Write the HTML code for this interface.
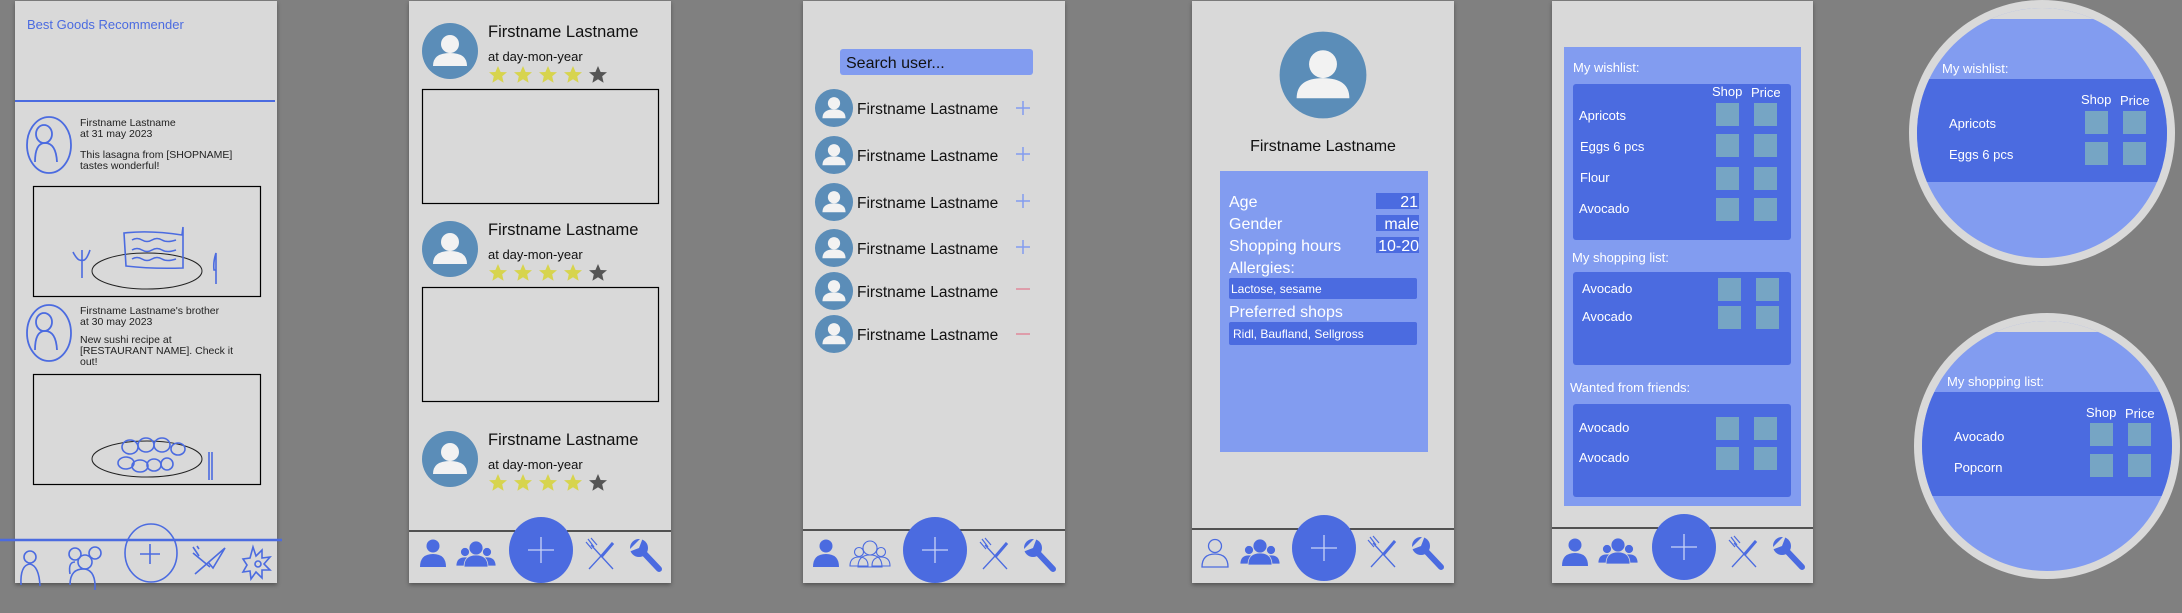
<!DOCTYPE html>
<html><head><meta charset="utf-8"><style>
html,body{margin:0;padding:0;background:#808080;}
svg{display:block;font-family:"Liberation Sans",sans-serif;}
</style></head><body>
<svg width="2182" height="613" viewBox="0 0 2182 613" xmlns="http://www.w3.org/2000/svg">
<defs>
<filter id="sh" x="-10%" y="-10%" width="120%" height="120%"><feDropShadow dx="0" dy="2" stdDeviation="2" flood-color="#000" flood-opacity="0.35"/></filter>
<g id="person"><circle cx="0" cy="-9" r="6.5" fill="#4b6be0"/><path d="M-13,12 Q-13,-1 0,-1 Q13,-1 13,12 Z" fill="#4b6be0"/></g>
<g id="personO" fill="none" stroke="#4b6be0" stroke-width="1.3"><circle cx="0" cy="-9" r="6.5"/><path d="M-13,12 Q-13,-1 0,-1 Q13,-1 13,12 Z"/></g>
<g id="group0"><circle cx="-11" cy="-3" r="4.5"/><path d="M-20,11 Q-20,2 -11,2 Q-2,2 -2,11Z"/><circle cx="11" cy="-3" r="4.5"/><path d="M2,11 Q2,2 11,2 Q20,2 20,11Z"/><circle cx="0" cy="-7" r="7"/><path d="M-12,12 Q-12,0 0,0 Q12,0 12,12 Z"/></g>
<g id="group" fill="#4b6be0" stroke="#d9d9d9" stroke-width="0.8"><use href="#group0"/></g>
<g id="groupO" fill="none" stroke="#4b6be0" stroke-width="1.1"><use href="#group0"/></g>
<g id="cut" stroke="#4b6be0" fill="none"><path d="M-10,-10 L12,14" stroke-width="1.3"/><path d="M12,-12 L-12,14" stroke-width="1.3"/><path d="M12,-12 L0,2" stroke-width="3"/><path d="M-13,-16 L-7,-8 M-10,-17 L-4,-10 M-15,-13 L-9,-6" stroke-width="1.2"/></g>
<g id="wrench"><path d="M-4,-4 L13,14" stroke="#4b6be0" stroke-width="6" stroke-linecap="round"/><circle cx="-7" cy="-7" r="9" fill="#4b6be0"/><path d="M-7,-7 L-2,-20 L-20,-2 Z" fill="#d9d9d9"/></g>
<g id="plusC"><ellipse rx="32" ry="33" fill="#4b6be0"/><path d="M-13,0 H13 M0,-13 V13" stroke="#c9d3f5" stroke-width="1.3"/></g>
<g id="avatar"><circle r="28" fill="#5b8db8"/><circle cx="0" cy="-7" r="9" fill="#f2f2f2"/><path d="M-17,15 Q-17,2 0,2 Q17,2 17,15 Z" fill="#f2f2f2"/></g>
<g id="star"><path d="M0,-9 L2.6,-3 L9,-2.8 L4.2,1.3 L5.6,7.8 L0,4.3 L-5.6,7.8 L-4.2,1.3 L-9,-2.8 L-2.6,-3Z"/></g>
<g id="stars"><use href="#star" x="0" fill="#d7d44e"/><use href="#star" x="25" fill="#d7d44e"/><use href="#star" x="50" fill="#d7d44e"/><use href="#star" x="75" fill="#d7d44e"/><use href="#star" x="100" fill="#555"/></g>
<g id="sq"><rect width="23" height="23" fill="#76a5c4"/></g>
</defs>

<!-- Panel 1 -->
<rect x="15" y="1" width="262" height="582" fill="#d9d9d9" filter="url(#sh)"/>
<text x="27" y="29" font-size="13" fill="#4b6be0">Best Goods Recommender</text>
<line x1="15" y1="101" x2="275" y2="101" stroke="#4b6be0" stroke-width="2"/>
<g fill="none" stroke="#4b6be0" stroke-width="1.8">
<ellipse cx="49" cy="145" rx="22" ry="28"/><ellipse cx="44" cy="134" rx="8" ry="9"/><path d="M35,162 Q35,143 45,143 Q56,143 57,162"/>
<ellipse cx="49" cy="333" rx="22" ry="28"/><ellipse cx="44" cy="322" rx="8" ry="9"/><path d="M35,350 Q35,331 45,331 Q56,331 57,350"/>
</g>
<g font-size="10.5" fill="#222">
<text x="80" y="126">Firstname Lastname</text><text x="80" y="137">at 31 may 2023</text>
<text x="80" y="158">This lasagna from [SHOPNAME]</text><text x="80" y="169">tastes wonderful!</text>
<text x="80" y="314">Firstname Lastname's brother</text><text x="80" y="325">at 30 may 2023</text>
<text x="80" y="343">New sushi recipe at</text><text x="80" y="354">[RESTAURANT NAME]. Check it</text><text x="80" y="365">out!</text>
</g>
<rect x="33.5" y="186.5" width="227" height="110" fill="none" stroke="#000" stroke-width="1.2"/>
<rect x="33.5" y="374.5" width="227" height="110" fill="none" stroke="#000" stroke-width="1.2"/>
<ellipse cx="147" cy="271" rx="55" ry="18" fill="none" stroke="#222" stroke-width="1"/>
<ellipse cx="147" cy="459" rx="55" ry="18" fill="none" stroke="#222" stroke-width="1"/>
<g fill="none" stroke="#4b6be0" stroke-width="1.6">
<path d="M124,233 Q150,230 182,235 L183,227 L183,268 Q150,269 126,266 Q125,250 124,233Z"/>
<path d="M132,240 q5,-3 10,0 t10,0 t10,0 t14,0 M132,250 q5,-3 10,0 t10,0 t10,0 t14,0 M132,259 q5,-3 10,0 t10,0 t10,0 t14,0"/>
<path d="M82,278 V250 M73,252 Q78,262 82,260 Q86,262 90,250 M82,260 V250"/><path d="M216,284 V253 Q213,262 214,270 H216"/>
<path d="M209,452 V480 M212,452 V480"/>
<g><ellipse cx="130" cy="447" rx="8" ry="7"/><ellipse cx="146" cy="445" rx="8" ry="7"/><ellipse cx="162" cy="445" rx="8" ry="7"/><ellipse cx="178" cy="449" rx="7" ry="6"/><ellipse cx="126" cy="463" rx="8" ry="6"/><ellipse cx="140" cy="466" rx="8" ry="6"/><ellipse cx="154" cy="465" rx="7" ry="6"/><ellipse cx="167" cy="464" rx="6" ry="6"/></g>
<ellipse cx="151" cy="553" rx="26" ry="29"/><path d="M140,554 H160 M150,544 V564"/>
<circle cx="30" cy="557" r="6"/><path d="M21,585 Q20,565 30,564 Q39,566 40,586"/>
<circle cx="75" cy="554" r="6"/><circle cx="95" cy="553" r="6"/><circle cx="85" cy="562" r="7"/><path d="M70,585 Q70,568 85,569 Q96,571 95,590 M70,574 Q68,562 75,562"/>
<path d="M195,574 L225,548 L213,568 L208,562 M193,553 L210,567 M193,547 L199,556 M197,546 l2,3"/>
<path d="M253,547 L256,556 L262,550 L262,558 L270,557 L264,564 L270,570 L262,570 L262,578 L256,572 L251,579 L250,571 L243,572 L247,565 L243,559 L250,558Z"/><circle cx="258" cy="564" r="3"/>
</g>
<line x1="0" y1="540" x2="282" y2="540" stroke="#4b6be0" stroke-width="2.4"/>

<!-- Panel 2 -->
<rect x="409" y="1" width="262" height="582" fill="#d9d9d9" filter="url(#sh)"/>
<use href="#avatar" x="450" y="51"/>
<use href="#avatar" x="450" y="249"/>
<use href="#avatar" x="450" y="459"/>
<g fill="#111"><text x="488" y="37" font-size="16.5">Firstname Lastname</text><text x="488" y="61" font-size="13">at day-mon-year</text>
<text x="488" y="235" font-size="16.5">Firstname Lastname</text><text x="488" y="259" font-size="13">at day-mon-year</text>
<text x="488" y="445" font-size="16.5">Firstname Lastname</text><text x="488" y="469" font-size="13">at day-mon-year</text></g>
<use href="#stars" x="498" y="75"/><use href="#stars" x="498" y="273"/><use href="#stars" x="498" y="483"/>
<rect x="422.5" y="89.5" width="236" height="114" fill="none" stroke="#000" stroke-width="1.2"/>
<rect x="422.5" y="287.5" width="236" height="114" fill="none" stroke="#000" stroke-width="1.2"/>
<line x1="409" y1="531" x2="671" y2="531" stroke="#000" stroke-width="1.2"/>
<use href="#person" x="433" y="555"/><use href="#group" x="476" y="555"/><use href="#plusC" x="541" y="550"/><use href="#cut" x="601" y="555"/><use href="#wrench" x="646" y="555"/>

<!-- Panel 3 -->
<rect x="803" y="1" width="262" height="582" fill="#d9d9d9" filter="url(#sh)"/>
<rect x="840" y="49" width="193" height="26" rx="3" fill="#829cf0"/>
<text x="846" y="68" font-size="16" fill="#111">Search user...</text>
<g font-size="15.5" fill="#111">
<use href="#avatar" transform="translate(834,108) scale(0.68)"/><text x="857" y="114">Firstname Lastname</text>
<use href="#avatar" transform="translate(834,155) scale(0.68)"/><text x="857" y="161">Firstname Lastname</text>
<use href="#avatar" transform="translate(834,202) scale(0.68)"/><text x="857" y="208">Firstname Lastname</text>
<use href="#avatar" transform="translate(834,248) scale(0.68)"/><text x="857" y="254">Firstname Lastname</text>
<use href="#avatar" transform="translate(834,291) scale(0.68)"/><text x="857" y="297">Firstname Lastname</text>
<use href="#avatar" transform="translate(834,334) scale(0.68)"/><text x="857" y="340">Firstname Lastname</text>
</g>
<g stroke="#829cf0" stroke-width="1.5"><path d="M1016,108 H1030 M1023,101 V115 M1016,154 H1030 M1023,147 V161 M1016,201 H1030 M1023,194 V208 M1016,247 H1030 M1023,240 V254"/></g>
<g stroke="#e0899b" stroke-width="1.5"><path d="M1016,289 H1030 M1016,334 H1030"/></g>
<line x1="803" y1="530" x2="1065" y2="530" stroke="#000" stroke-width="1.2"/>
<use href="#person" x="826" y="555"/><use href="#groupO" x="870" y="555"/><use href="#plusC" x="935" y="550"/><use href="#cut" x="995" y="555"/><use href="#wrench" x="1040" y="555"/>

<!-- Panel 4 -->
<rect x="1192" y="1" width="262" height="582" fill="#d9d9d9" filter="url(#sh)"/>
<use href="#avatar" transform="translate(1323,75) scale(1.55)"/>
<text x="1323" y="151" font-size="16" fill="#111" text-anchor="middle">Firstname Lastname</text>
<rect x="1220" y="171" width="208" height="281" fill="#829cf0"/>
<rect x="1376" y="193" width="43" height="16" fill="#4b6be0"/><rect x="1376" y="215" width="43" height="16" fill="#4b6be0"/><rect x="1376" y="237" width="43" height="16" fill="#4b6be0"/>
<rect x="1229" y="278" width="188" height="21" rx="2" fill="#4b6be0"/><rect x="1229" y="322" width="188" height="23" rx="2" fill="#4b6be0"/>
<g fill="#fff" font-size="16"><text x="1229" y="207">Age</text><text x="1229" y="229">Gender</text><text x="1229" y="251">Shopping hours</text><text x="1229" y="273">Allergies:</text><text x="1229" y="317">Preferred shops</text>
<text x="1418" y="207" text-anchor="end">21</text><text x="1419" y="229" text-anchor="end">male</text><text x="1419" y="251" text-anchor="end">10-20</text>
<text x="1231" y="293" font-size="12">Lactose, sesame</text><text x="1233" y="338" font-size="12">Ridl, Baufland, Sellgross</text></g>
<line x1="1192" y1="529" x2="1454" y2="529" stroke="#000" stroke-width="1.2"/>
<use href="#personO" x="1215" y="555"/><use href="#group" x="1260" y="553"/><use href="#plusC" x="1324" y="548"/><use href="#cut" x="1383" y="553"/><use href="#wrench" x="1428" y="553"/>

<!-- Panel 5 -->
<rect x="1552" y="1" width="261" height="582" fill="#d9d9d9" filter="url(#sh)"/>
<rect x="1564" y="47" width="237" height="459" fill="#829cf0"/>
<rect x="1573" y="84" width="218" height="156" rx="3" fill="#4b6be0"/>
<rect x="1573" y="272" width="218" height="93" rx="3" fill="#4b6be0"/>
<rect x="1573" y="404" width="218" height="93" rx="3" fill="#4b6be0"/>
<g fill="#fff" font-size="13">
<text x="1573" y="72">My wishlist:</text><text x="1712" y="96">Shop</text><text x="1751" y="97">Price</text>
<text x="1579" y="120">Apricots</text><text x="1580" y="151">Eggs 6 pcs</text><text x="1580" y="182">Flour</text><text x="1579" y="213">Avocado</text>
<text x="1572" y="262">My shopping list:</text><text x="1582" y="293">Avocado</text><text x="1582" y="321">Avocado</text>
<text x="1570" y="392">Wanted from friends:</text><text x="1579" y="432">Avocado</text><text x="1579" y="462">Avocado</text>
</g>
<use href="#sq" x="1716" y="103"/><use href="#sq" x="1754" y="103"/><use href="#sq" x="1716" y="134"/><use href="#sq" x="1754" y="134"/>
<use href="#sq" x="1716" y="167"/><use href="#sq" x="1754" y="167"/><use href="#sq" x="1716" y="198"/><use href="#sq" x="1754" y="198"/>
<use href="#sq" x="1718" y="278"/><use href="#sq" x="1756" y="278"/><use href="#sq" x="1718" y="306"/><use href="#sq" x="1756" y="306"/>
<use href="#sq" x="1716" y="417"/><use href="#sq" x="1754" y="417"/><use href="#sq" x="1716" y="447"/><use href="#sq" x="1754" y="447"/>
<line x1="1552" y1="528" x2="1813" y2="528" stroke="#000" stroke-width="1.2"/>
<use href="#person" x="1575" y="554"/><use href="#group" x="1618" y="552"/><use href="#plusC" x="1684" y="547"/><use href="#cut" x="1744" y="553"/><use href="#wrench" x="1789" y="553"/>

<!-- Circle 1 -->
<clipPath id="c1"><ellipse cx="2042" cy="133" rx="125" ry="125"/></clipPath>
<ellipse cx="2042" cy="133" rx="133" ry="133" fill="#d9d9d9"/>
<g clip-path="url(#c1)">
<rect x="1900" y="0" width="290" height="280" fill="#829cf0"/><rect x="1900" y="0" width="290" height="19" fill="#d9d9d9"/>
<rect x="1900" y="79" width="290" height="103" fill="#4b6be0"/>
</g>
<g fill="#fff" font-size="13"><text x="1942" y="73">My wishlist:</text><text x="2081" y="104">Shop</text><text x="2120" y="105">Price</text><text x="1949" y="128">Apricots</text><text x="1949" y="159">Eggs 6 pcs</text></g>
<use href="#sq" x="2085" y="111"/><use href="#sq" x="2123" y="111"/><use href="#sq" x="2085" y="142"/><use href="#sq" x="2123" y="142"/>

<!-- Circle 2 -->
<clipPath id="c2"><ellipse cx="2047" cy="446" rx="125" ry="125"/></clipPath>
<ellipse cx="2047" cy="446" rx="133" ry="133" fill="#d9d9d9"/>
<g clip-path="url(#c2)">
<rect x="1900" y="313" width="290" height="280" fill="#829cf0"/><rect x="1900" y="313" width="290" height="19" fill="#d9d9d9"/>
<rect x="1900" y="392" width="290" height="104" fill="#4b6be0"/>
</g>
<g fill="#fff" font-size="13"><text x="1947" y="386">My shopping list:</text><text x="2086" y="417">Shop</text><text x="2125" y="418">Price</text><text x="1954" y="441">Avocado</text><text x="1954" y="472">Popcorn</text></g>
<use href="#sq" x="2090" y="423"/><use href="#sq" x="2128" y="423"/><use href="#sq" x="2090" y="454"/><use href="#sq" x="2128" y="454"/>
</svg>
</body></html>
